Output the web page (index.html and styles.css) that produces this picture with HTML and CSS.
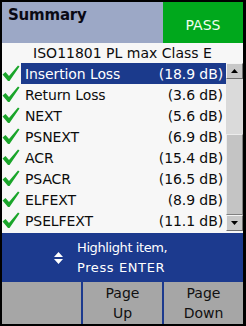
FILE: index.html
```html
<!DOCTYPE html>
<html>
<head>
<meta charset="utf-8">
<link rel="stylesheet" href="styles.css">
</head>
<body>
<div class="screen">
  <div class="header">
    <div class="title">Summary</div>
    <div class="status">PASS</div>
  </div>
  <div class="panel">
    <div class="standard">ISO11801 PL max Class E</div>
    <div class="listwrap">
      <div class="list">
        <div class="row"><svg class="chk" viewBox="0 0 18 17"><path d="M0.5 9.5 L3.5 7 L7 11 L16 0.5 L17.5 1.5 L7.5 16 L6 16 Z"/></svg><div class="item sel"><span>Insertion Loss</span><span>(18.9 dB)</span></div></div>
        <div class="row"><svg class="chk" viewBox="0 0 18 17"><path d="M0.5 9.5 L3.5 7 L7 11 L16 0.5 L17.5 1.5 L7.5 16 L6 16 Z"/></svg><div class="item"><span>Return Loss</span><span>(3.6 dB)</span></div></div>
        <div class="row"><svg class="chk" viewBox="0 0 18 17"><path d="M0.5 9.5 L3.5 7 L7 11 L16 0.5 L17.5 1.5 L7.5 16 L6 16 Z"/></svg><div class="item"><span>NEXT</span><span>(5.6 dB)</span></div></div>
        <div class="row"><svg class="chk" viewBox="0 0 18 17"><path d="M0.5 9.5 L3.5 7 L7 11 L16 0.5 L17.5 1.5 L7.5 16 L6 16 Z"/></svg><div class="item"><span>PSNEXT</span><span>(6.9 dB)</span></div></div>
        <div class="row"><svg class="chk" viewBox="0 0 18 17"><path d="M0.5 9.5 L3.5 7 L7 11 L16 0.5 L17.5 1.5 L7.5 16 L6 16 Z"/></svg><div class="item"><span>ACR</span><span>(15.4 dB)</span></div></div>
        <div class="row"><svg class="chk" viewBox="0 0 18 17"><path d="M0.5 9.5 L3.5 7 L7 11 L16 0.5 L17.5 1.5 L7.5 16 L6 16 Z"/></svg><div class="item"><span>PSACR</span><span>(16.5 dB)</span></div></div>
        <div class="row"><svg class="chk" viewBox="0 0 18 17"><path d="M0.5 9.5 L3.5 7 L7 11 L16 0.5 L17.5 1.5 L7.5 16 L6 16 Z"/></svg><div class="item"><span>ELFEXT</span><span>(8.9 dB)</span></div></div>
        <div class="row"><svg class="chk" viewBox="0 0 18 17"><path d="M0.5 9.5 L3.5 7 L7 11 L16 0.5 L17.5 1.5 L7.5 16 L6 16 Z"/></svg><div class="item"><span>PSELFEXT</span><span>(11.1 dB)</span></div></div>
      </div>
      <div class="scrollbar">
        <div class="sbtn"><svg viewBox="0 0 7 4" class="arr"><path d="M3.5 0 L7 4 L0 4 Z"/></svg></div>
        <div class="track"></div>
        <div class="thumb"></div>
        <div class="sbtn"><svg viewBox="0 0 7 4" class="arr"><path d="M0 0 L7 0 L3.5 4 Z"/></svg></div>
      </div>
    </div>
  </div>
  <div class="hint">
    <svg class="updown" viewBox="0 0 9 12"><path d="M4.5 0 L9 5 L0 5 Z M0 7 L9 7 L4.5 12 Z"/></svg>
    <div class="hinttext"><div class="l1">Highlight item,</div><div class="l2">Press ENTER</div></div>
  </div>
  <div class="keys">
    <div class="key"></div>
    <div class="key">Page<br>Up</div>
    <div class="key">Page<br>Down</div>
  </div>
</div>
</body>
</html>
```

FILE: styles.css
```css
html, body {
  margin: 0;
  padding: 0;
  background: #000;
}
.screen {
  width: 241px;
  height: 322px;
  padding: 2px 3px 2px 2px;
  background: #000;
  display: flex;
  flex-direction: column;
  font-family: "DejaVu Sans", Verdana, sans-serif;
  font-size: 13px;
}
.header {
  height: 41px;
  display: flex;
}
.title {
  width: 161px;
  background: #9ca8c6;
  color: #0a0a14;
  font-weight: bold;
  font-size: 15px;
  padding: 4px 0 0 6px;
  box-sizing: border-box;
  letter-spacing: -0.2px;
}
.status {
  flex: 1;
  background: #00a81c;
  color: #f0fff0;
  font-size: 14px;
  display: flex;
  justify-content: center;
  padding-top: 15px;
  box-sizing: border-box;
}
.panel {
  height: 190px;
  background: #f7f7f7;
  color: #0c0c0c;
}
.standard {
  height: 20px;
  line-height: 21px;
  text-align: center;
  font-size: 14px;
}
.listwrap {
  display: flex;
  height: 168px;
}
.list {
  width: 224px;
  display: flex;
  flex-direction: column;
}
.row {
  height: 21px;
  display: flex;
  align-items: center;
}
.chk {
  width: 18px;
  height: 17px;
  margin: 0 1px 0 0;
  fill: #1aa52a;
}
.item {
  flex: 1;
  height: 21px;
  display: flex;
  justify-content: space-between;
  align-items: center;
  padding: 0 3px 0 4px;
  font-size: 14px;
  letter-spacing: -0.1px;
}
.item.sel {
  background: #1b3a8c;
  color: #fff;
}
.scrollbar {
  width: 17px;
  display: flex;
  flex-direction: column;
  background: #c4c4c4;
}
.sbtn {
  height: 16px;
  background: #c8c8c8;
  border: 1px solid;
  border-color: #f4f4f4 #707070 #707070 #f4f4f4;
  box-sizing: border-box;
  display: flex;
  align-items: center;
  justify-content: center;
}
.arr {
  width: 7px;
  height: 4px;
  fill: #000;
}
.track {
  height: 55px;
  background: #dadada;
}
.thumb {
  flex: 1;
  background: #c4c4c4;
  border: 1px solid;
  border-color: #ececec #808080 #808080 #ececec;
}
.hint {
  height: 49px;
  background: #1c3a8e;
  color: #fff;
  display: flex;
  align-items: center;
  padding-left: 52px;
  gap: 14px;
  font-size: 13px;
}
.updown {
  width: 9px;
  height: 12px;
  fill: #fff;
}
.hinttext {
  line-height: 20px;
}
.l1 {
  letter-spacing: -0.4px;
}
.l2 {
  letter-spacing: 0.6px;
}
.keys {
  flex: 1;
  display: flex;
  gap: 2px;
  background: #1c3a8e;
}
.key {
  flex: 1;
  background: #a6a6a6;
  color: #111;
  font-size: 14px;
  line-height: 20px;
  text-align: center;
  display: flex;
  align-items: center;
  justify-content: center;
}
```
